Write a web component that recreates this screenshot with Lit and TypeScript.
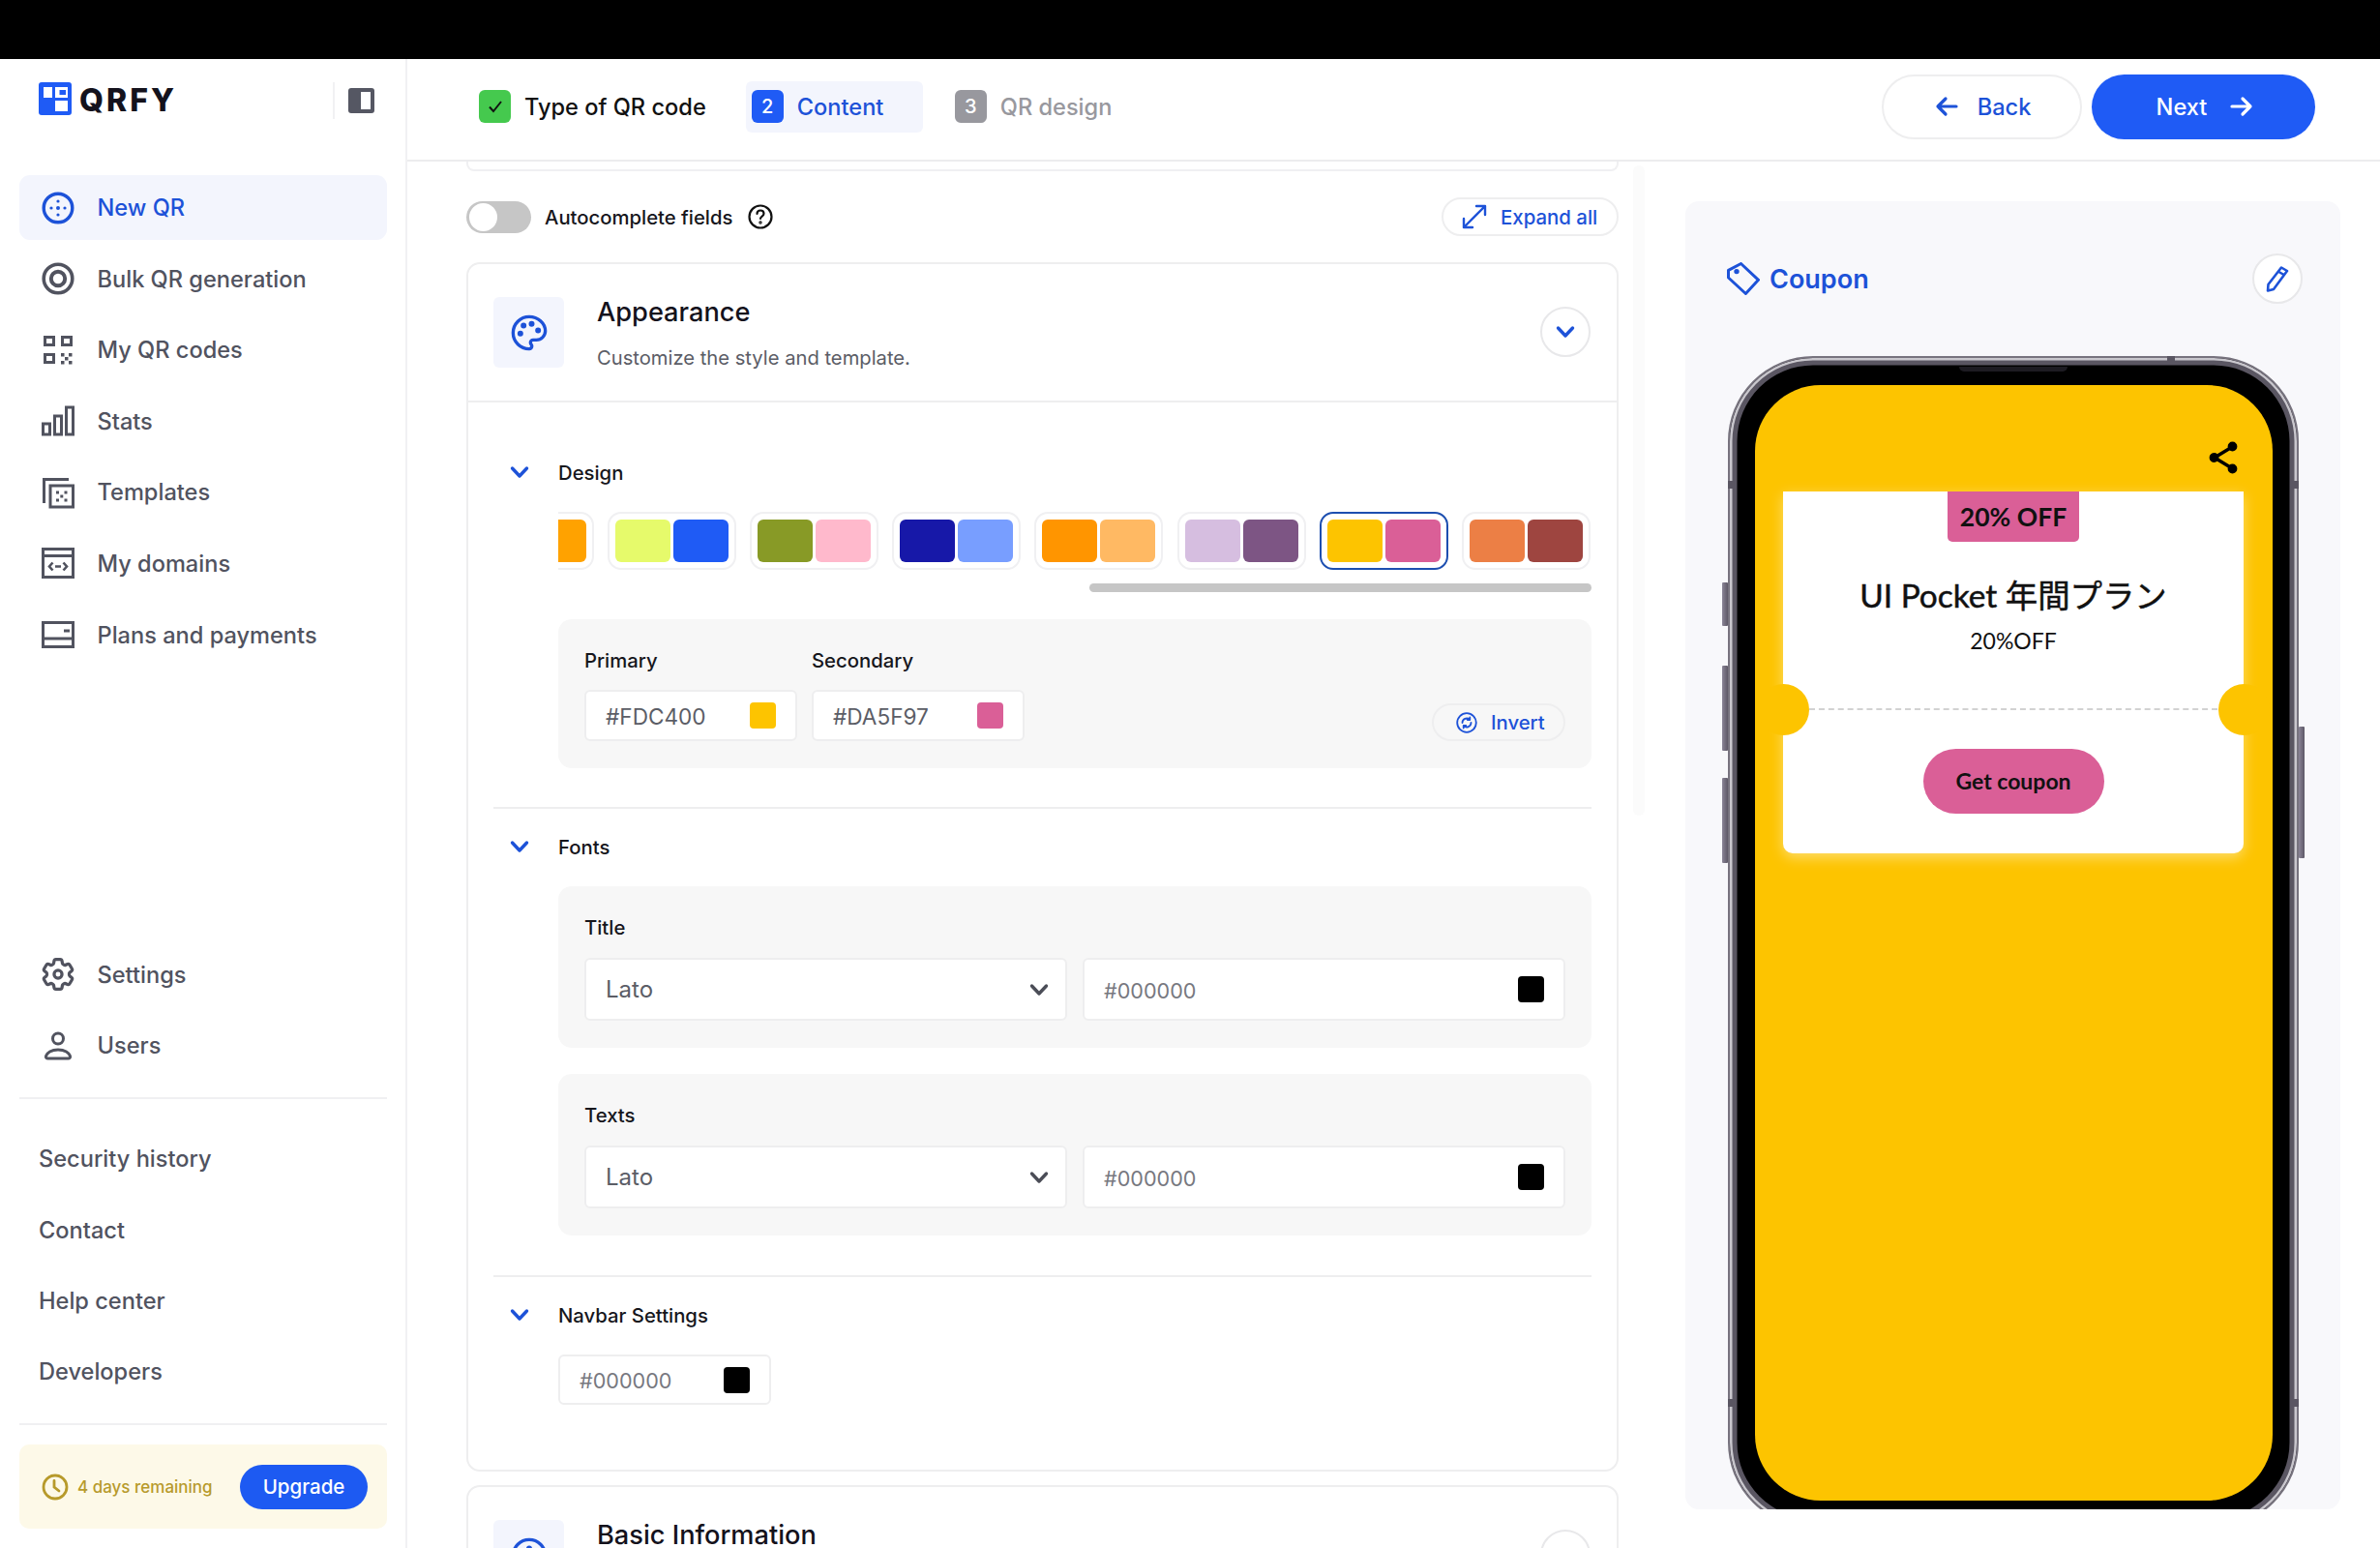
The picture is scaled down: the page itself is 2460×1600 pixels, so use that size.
import { LitElement, html, css, svg } from "lit";
import { customElement } from "lit/decorators.js";

const ic = (body: unknown, size = 34, vb = 34) =>
  html`<svg class="ic" width=${size} height=${size} viewBox="0 0 ${vb} ${vb}" fill="none" stroke="currentColor" stroke-width="3">${body}</svg>`;

const icons = {
  newqr: svg`<circle cx="17" cy="17" r="14.8" stroke-width="3.4"/><g fill="currentColor" stroke="none"><circle cx="17" cy="17" r="2"/><circle cx="17" cy="10" r="1.6"/><circle cx="17" cy="24" r="1.6"/><circle cx="10" cy="17" r="1.6"/><circle cx="24" cy="17" r="1.6"/></g>`,
  bulk: svg`<circle cx="17" cy="17" r="14.8" stroke-width="3.6"/><circle cx="17" cy="17" r="7.2" stroke-width="4"/>`,
  codes: svg`<rect x="3.5" y="3.5" width="9" height="8" /><rect x="21.5" y="3.5" width="9" height="8"/><rect x="3.5" y="21.5" width="9" height="8"/><g fill="currentColor" stroke="none"><rect x="20" y="20" width="3.5" height="3.5"/><rect x="28" y="20" width="3.5" height="3.5"/><rect x="24" y="24" width="3.5" height="3.5"/><rect x="20" y="28" width="3.5" height="3.5"/><rect x="28" y="28" width="3.5" height="3.5"/></g>`,
  stats: svg`<rect x="1.5" y="20" width="7" height="11"/><rect x="13.5" y="12" width="7" height="19"/><rect x="25.5" y="3" width="7" height="28"/>`,
  templates: svg`<path d="M2.5 28V3.5H28"/><rect x="9" y="10" width="23.5" height="22"/><g fill="currentColor" stroke="none"><rect x="15" y="15.5" width="3" height="3"/><rect x="23.5" y="15.5" width="3" height="3"/><rect x="19.3" y="19.5" width="3" height="3"/><rect x="15" y="23.5" width="3" height="3"/><rect x="23.5" y="23.5" width="3" height="3"/></g>`,
  domains: svg`<rect x="1.5" y="2.5" width="31" height="29"/><path d="M1.5 9.5h31"/><path d="M11.5 16.5l-3.5 4 3.5 4M22.5 16.5l3.5 4-3.5 4M14 20.5h6" stroke-width="2.6"/>`,
  plans: svg`<rect x="1.5" y="4.5" width="31" height="25"/><path d="M1.5 21h31"/><path d="M23 13h6"/>`,
  gear: svg`<g transform="translate(-3.4 -3.4) scale(1.7)" stroke-width="1.9"><path d="M9.594 3.94c.09-.542.56-.94 1.11-.94h2.593c.55 0 1.02.398 1.11.94l.213 1.281c.063.374.313.686.645.87.074.04.147.083.22.127.325.196.72.257 1.075.124l1.217-.456a1.125 1.125 0 0 1 1.37.49l1.296 2.247a1.125 1.125 0 0 1-.26 1.431l-1.003.827c-.293.241-.438.613-.43.992a7.723 7.723 0 0 1 0 .255c-.008.378.137.75.43.991l1.004.827c.424.35.534.955.26 1.43l-1.298 2.247a1.125 1.125 0 0 1-1.369.491l-1.217-.456c-.355-.133-.75-.072-1.076.124a6.47 6.47 0 0 1-.22.128c-.331.183-.581.495-.644.869l-.213 1.281c-.09.543-.56.94-1.11.94h-2.594c-.55 0-1.019-.398-1.11-.94l-.213-1.281c-.062-.374-.312-.686-.644-.87a6.52 6.52 0 0 1-.22-.127c-.325-.196-.72-.257-1.076-.124l-1.217.456a1.125 1.125 0 0 1-1.369-.49l-1.297-2.247a1.125 1.125 0 0 1 .26-1.431l1.004-.827c.292-.24.437-.613.43-.991a6.932 6.932 0 0 1 0-.255c.007-.38-.138-.751-.43-.992l-1.004-.827a1.125 1.125 0 0 1-.26-1.43l1.297-2.247a1.125 1.125 0 0 1 1.37-.491l1.216.456c.356.133.751.072 1.076-.124.072-.044.146-.086.22-.128.332-.183.582-.495.644-.869l.214-1.28Z"/><circle cx="12" cy="12" r="2.4"/></g>`,
  user: svg`<circle cx="17" cy="9.500" r="5.500"/><path d="M6.500 30h21c1.500 0 2.500-1 2-2.500-1-3.500-5.500-6.500-12.500-6.500s-11.500 3-12.500 6.500c-.5 1.500.5 2.500 2 2.500z"/>`,
};

const chev = html`<svg class="chev" width="20" height="14" viewBox="0 0 20 14" fill="none" stroke="currentColor" stroke-width="3.4" stroke-linecap="round" stroke-linejoin="round"><path d="M2.500 3l7.500 8 7.500-8"/></svg>`;

const SWATCHES: [string, string, boolean?][] = [
  ["#FFC86A", "#FFA200"],
  ["#E6FA6B", "#1F5BF5"],
  ["#889A26", "#FFB9CC"],
  ["#1718A8", "#789EFF"],
  ["#FF9500", "#FFB963"],
  ["#D6BEE0", "#7D5584"],
  ["#FDC400", "#DA5F97", true],
  ["#EC7F45", "#9E4540"],
];

const NAV: [string, unknown, boolean?][] = [
  ["New QR", icons.newqr, true],
  ["Bulk QR generation", icons.bulk],
  ["My QR codes", icons.codes],
  ["Stats", icons.stats],
  ["Templates", icons.templates],
  ["My domains", icons.domains],
  ["Plans and payments", icons.plans],
];

@customElement("app-root")
export class AppRoot extends LitElement {
  static styles = css`
    :host { display: block; width: 2460px; height: 1600px; overflow: hidden; background: #fff; font-family: Inter, "Noto Sans CJK JP", sans-serif; color: #111; }
    * { box-sizing: border-box; }
    .ic { display: block; flex: none; }
    .top { height: 61px; background: #000; }
    .body { display: flex; height: 1539px; }

    aside { width: 421px; flex: none; border-right: 2px solid #f1f1f3; padding: 0 19px 20px 20px; display: flex; flex-direction: column; color: #51535f; }
    .brand { height: 120px; padding: 24px 13px 0 20px; display: flex; align-items: flex-start; }
    .logo { width: 34px; height: 34px; flex: none; }
    .word { font-size: 32px; line-height: 34px; font-weight: 800; letter-spacing: 3px; color: #14121c; margin: 2px 0 0 8px; }
    .brand-tail { margin-left: auto; display: flex; align-items: center; height: 38px; border-left: 2px solid #f1f1f3; padding-left: 14px; }
    .nav { display: flex; flex-direction: column; gap: 6.6px; }
    .nav.links { gap: 6.2px; }
    .row { height: 67px; display: flex; align-items: center; gap: 23.5px; padding-left: 23px; border-radius: 11px; font-size: 23.6px; font-weight: 500; }
    .row.on { background: #f3f5fd; color: #1d52d8; }
    .links .row { padding-left: 20px; }
    .spacer { flex: 1; }
    .rule { height: 2px; background: #f0f0f2; }
    .rule.a { margin: 20px 0 28px; }
    .rule.b { margin: 20px 0 20px; }
    .trial { height: 87px; flex: none; background: #fdf9e8; border-radius: 10px; display: flex; align-items: center; padding: 0 20px 0 23px; color: #b79a2b; font-size: 17px; font-weight: 500; }
    .trial span { margin-left: 9px; }
    .upgrade { margin-left: auto; width: 132px; height: 46px; border-radius: 23px; background: #1d5af2; color: #fff; font-size: 20.5px; font-weight: 500; display: flex; align-items: center; justify-content: center; }

    .main { flex: 1; display: flex; flex-direction: column; min-width: 0; }
    header { height: 106px; flex: none; border-bottom: 2px solid #ececee; padding: 0 67px 6px 74px; display: flex; align-items: center; }
    .step { display: flex; align-items: center; gap: 14px; font-size: 23.6px; font-weight: 500; }
    .num { width: 33px; height: 34px; border-radius: 6px; display: flex; align-items: center; justify-content: center; color: #fff; font-size: 20px; font-weight: 500; }
    .s1 .num { background: #45c94e; color: #111; }
    .s2 { width: 183px; height: 53px; padding-left: 6px; margin-left: 41px; border-radius: 6px; background: #f3f5fd; color: #1d52d8; }
    .s2 .num { background: #1f5bf5; }
    .s3 { margin-left: 33px; color: #98989e; }
    .s3 .num { background: #98989e; }
    .btns { margin-left: auto; display: flex; gap: 10px; }
    .btn { height: 67px; border-radius: 34px; display: flex; align-items: center; justify-content: center; gap: 20px; font-size: 23.6px; font-weight: 500; }
    .back { width: 207px; border: 2px solid #eeeeef; color: #1d52d8; padding-left: 2px; }
    .next { width: 231px; background: #1f5bf5; color: #fff; gap: 24px; padding-left: 3px; }

    .content { flex: 1; display: flex; min-height: 0; }
    .left { width: 1191px; margin-left: 61px; flex: none; overflow: hidden; }
    .track { width: 12px; height: 672px; margin: 4px 0 0 15px; flex: none; border-radius: 6px; background: #fbfbfb; }
    .prev { height: 10px; border: 2px solid #f0f0f2; border-top: 0; border-radius: 0 0 8px 8px; }
    .tools { display: flex; align-items: center; height: 40px; margin-top: 27px; margin-bottom: 27px; }
    .toggle { width: 67px; height: 33px; border-radius: 17px; background: #c6c6c6; padding: 2px 3px; margin-right: 14px; }
    .knob { width: 29px; height: 29px; border-radius: 50%; background: #fff; }
    .auto { font-size: 20.300px; font-weight: 500; color: #16161c; margin-right: 16px; }
    .expand { margin-left: auto; width: 183px; height: 40px; border: 2px solid #eeeeef; border-radius: 20px; display: flex; align-items: center; gap: 14px; padding-left: 19px; color: #1d52d8; font-size: 20.400px; font-weight: 500; }

    .card { border: 2px solid #eeeeef; border-radius: 14px; }
    .card + .card { margin-top: 14px; }
    .chead { height: 141px; display: flex; align-items: center; padding: 0 27px 0 26px; }
    .hbox { width: 73px; height: 73px; border-radius: 6px; background: #f3f5fd; color: #1d52d8; display: flex; align-items: center; justify-content: center; flex: none; }
    .htext { margin: 1px 0 0 34px; min-height: 79px; }
    .htext h2 { margin: 0; font-size: 27.200px; line-height: 36px; font-weight: 500; color: #14121c; }
    .htext p { margin: 15px 0 0; font-size: 20.200px; line-height: 28px; color: #5b5d66; }
    .card.basic h2 { line-height: 26px; margin-top: 5px; }
    .circle { margin-left: auto; width: 52px; height: 52px; border-radius: 50%; border: 2px solid #e8e8ea; background: #fff; color: #1d52d8; display: flex; align-items: center; justify-content: center; }
    .chead .circle { margin-top: -2px; }
    .cbody { border-top: 2px solid #eeeeef; padding: 57px 26px 67px; }
    .shead { display: flex; align-items: center; height: 30px; padding-left: 17px; gap: 30px; font-size: 20.300px; font-weight: 500; color: #16161c; }
    .shead .chev { color: #1d52d8; flex: none; }
    .sbody { margin: 26px 0 0 67px; }
    .swatches { display: flex; justify-content: flex-end; gap: 14.200px; overflow: hidden; padding-right: 1px; }
    .sw { width: 133px; height: 60px; flex: none; border: 2px solid #f0f0f2; border-radius: 14px; padding: 6px 6px; display: flex; gap: 3px; background: #fff; }
    .sw.sel { border-color: #1d4fb0; }
    .sw i { flex: 1; border-radius: 6px; }
    .sbar { height: 9px; width: 519px; margin: 14px 0 28px auto; border-radius: 5px; background: #c6c6c6; }
    .panel { background: #f7f7f7; border-radius: 14px; padding: 29px 27px 28px; }
    .panel + .panel { margin-top: 27px; }
    label { display: block; font-size: 20.300px; line-height: 28px; font-weight: 500; color: #16161c; }
    .colors { display: flex; gap: 15px; }
    .field label { margin-bottom: 16px; }
    .input { background: #fff; border: 2px solid #eeeeef; border-radius: 6px; display: flex; align-items: center; padding: 0 20px 0 20px; font-size: 24px; color: #5b5d66; }
    .input span { font-size: 22.600px; padding-top: 2px; }
    .input b { margin-left: auto; width: 27px; height: 27px; border-radius: 4px; flex: none; }
    .input .chev { margin-left: auto; color: #4b4d57; margin-right: -3px; }
    .color { width: 220px; height: 53px; }
    .input span.light { color: #77787f; font-size: 21.600px; }
    .invert { margin-left: auto; align-self: flex-end; width: 138px; height: 39px; border: 2px solid #eeeeef; border-radius: 20px; display: flex; align-items: center; gap: 14px; padding-left: 23px; color: #1d52d8; font-size: 20.300px; font-weight: 500; }
    .fgrid { display: grid; grid-template-columns: 1fr 1fr; gap: 16px; margin-top: 17px; }
    .fgrid .input { height: 65px; }
    .srule { height: 2px; background: #eeeeef; margin: 40px 0 24px; }
    .srule.t { margin-top: 41px; margin-bottom: 24px; }
    .nav-color { width: 220px; height: 52px; }

    .preview { width: 677px; height: 1352px; margin: 41px 0 0 42px; flex: none; background: #f8f8fb; border-radius: 14px; overflow: hidden; padding: 54px 0 0 44px; position: relative; }
    .phead { display: flex; align-items: center; height: 52px; padding-right: 39px; margin-left: -1px; gap: 10px; color: #1d52d8; font-size: 27px; font-weight: 600; }
    .phone { position: relative; width: 590px; height: 1211px; margin-top: 54px; border-radius: 88px; background: #000; border: 2px solid #77737e; box-shadow: inset 0 0 0 2.500px #c9c7cd, inset 0 0 0 7.500px #5a5662; padding: 27.500px 25.500px 0; }
    .notch { position: absolute; left: 237px; top: 9px; width: 112px; height: 5px; border-radius: 0 0 6px 6px; background: #1d1b22; }
    .side { position: absolute; width: 6px; background: linear-gradient(90deg, #8b8597, #5d5866); border-radius: 1px; }
    .side.l { left: -8px; }
    .side.l1 { top: 232px; height: 45px; }
    .side.l2 { top: 318px; height: 88px; }
    .side.l3 { top: 434px; height: 88px; }
    .side.r { left: 588px; top: 381px; height: 136px; }
    .ant { position: absolute; background: #5a5662; }
    .ant.t { left: 452px; top: -2px; width: 8px; height: 9px; }
    .ant.a { left: -2px; width: 8px; height: 8px; }
    .ant.b { right: -2px; width: 8px; height: 8px; }
    .ant.y1 { top: 127px; }
    .ant.y2 { top: 1076px; }
    .screen { height: 1153.500px; border-radius: 68px; background: #fdc400; display: flex; flex-direction: column; padding-top: 58px; overflow: hidden; position: relative; }
    .share { align-self: flex-end; margin-right: 36px; color: #000; }
    .coupon { margin: 18px 0 0 29.500px; width: 476px; height: 374px; background: #fff; border-radius: 0 0 10px 10px; box-shadow: 0 4px 14px rgba(255,255,255,.45); display: flex; flex-direction: column; align-items: center; font-family: Lato, "Noto Sans CJK JP", sans-serif; color: #111; }
    .badge { width: 136px; height: 52px; background: #da5f97; border-radius: 0 0 5px 5px; display: flex; align-items: center; justify-content: center; font-size: 26.500px; font-weight: 700; }
    .ctitle { font-size: 33.400px; line-height: 44px; margin-top: 33px; -webkit-text-stroke: 0.5px #111; }
    .csub { font-size: 23px; line-height: 30px; margin-top: 10px; }
    .perf { width: 100%; height: 53px; margin-top: 30px; display: flex; align-items: center; }
    .perf i { width: 53px; height: 53px; border-radius: 50%; background: #fdc400; flex: none; margin: 0 -26.500px; }
    .perf u { flex: 1; margin: 0 27px; border-top: 2px dashed #d2d2d2; }
    .get { width: 187px; height: 67px; margin-top: 14px; border-radius: 34px; background: #da5f97; display: flex; align-items: center; justify-content: center; font-size: 23px; font-weight: 700; }
  `;

  private colorInput(val: string, c: string, light = false, extra = "color") {
    return html`<div class="input ${extra}"><span class=${light ? "light" : ""}>${val}</span><b style="background:${c}"></b></div>`;
  }

  private fontPanel(name: string) {
    return html`<div class="panel">
      <label>${name}</label>
      <div class="fgrid">
        <div class="input">Lato ${chev}</div>
        ${this.colorInput("#000000", "#000", true, "")}
      </div>
    </div>`;
  }

  render() {
    return html`
      <div class="top"></div>
      <div class="body">
        <aside>
          <div class="brand">
            <svg class="logo" viewBox="0 0 34 34"><rect width="34" height="34" rx="3" fill="#1f5bf5"/><path fill="#fff" d="M5 5h9v11H5zM17 5h13v11H17zM17 19h13v11H17z"/><path fill="#1f5bf5" d="M21.500 8h6.500v5h-6.500z"/></svg>
            <span class="word">QRFY</span>
            <div class="brand-tail">
              <svg width="27" height="26" viewBox="0 0 27 26"><rect width="27" height="26" rx="3" fill="#555763"/><rect x="13" y="4" width="10" height="18" fill="#fff"/></svg>
            </div>
          </div>
          <div class="nav">
            ${NAV.map(([t, i, on]) => html`<div class="row ${on ? "on" : ""}">${ic(i)}<span>${t}</span></div>`)}
          </div>
          <div class="spacer"></div>
          <div class="nav">
            <div class="row">${ic(icons.gear)}<span>Settings</span></div>
            <div class="row">${ic(icons.user)}<span>Users</span></div>
          </div>
          <div class="rule a"></div>
          <div class="nav links">
            ${["Security history", "Contact", "Help center", "Developers"].map((t) => html`<div class="row">${t}</div>`)}
          </div>
          <div class="rule b"></div>
          <div class="trial">
            <svg width="28" height="28" viewBox="0 0 28 28" fill="none" stroke="currentColor" stroke-width="2.800" stroke-linecap="round"><circle cx="14" cy="14" r="12"/><path d="M13 7.500V14l5 4"/></svg>
            <span>4 days remaining</span>
            <div class="upgrade">Upgrade</div>
          </div>
        </aside>

        <div class="main">
          <header>
            <div class="step s1"><div class="num"><svg width="18" height="18" viewBox="0 0 18 18" fill="none" stroke="currentColor" stroke-width="2"><path d="M3 9.500l4 4.500 8-10"/></svg></div>Type of QR code</div>
            <div class="step s2"><div class="num">2</div>Content</div>
            <div class="step s3"><div class="num">3</div>QR design</div>
            <div class="btns">
              <div class="btn back"><svg width="24" height="22" viewBox="0 0 24 22" fill="none" stroke="currentColor" stroke-width="3.200" stroke-linecap="round" stroke-linejoin="round"><path d="M22 11H3M11 3l-8 8 8 8"/></svg>Back</div>
              <div class="btn next">Next<svg width="24" height="22" viewBox="0 0 24 22" fill="none" stroke="currentColor" stroke-width="3.200" stroke-linecap="round" stroke-linejoin="round"><path d="M2 11h19M13 3l8 8-8 8"/></svg></div>
            </div>
          </header>
          <div class="content">
            <div class="left">
              <div class="prev"></div>
              <div class="tools">
                <div class="toggle"><div class="knob"></div></div>
                <span class="auto">Autocomplete fields</span>
                <svg width="26" height="26" viewBox="0 0 26 26" fill="none" stroke="#111" stroke-width="2.200" stroke-linecap="round"><circle cx="13" cy="13" r="11.500"/><path d="M9.500 10c0-2 1.500-3.500 3.500-3.500s3.500 1.300 3.500 3.200c0 2.800-3.500 2.800-3.500 5.300"/><circle cx="13" cy="19" r=".6"/></svg>
                <div class="expand"><svg width="26" height="26" viewBox="0 0 26 26" fill="none" stroke="currentColor" stroke-width="2.400" stroke-linecap="round" stroke-linejoin="round"><path d="M15 2h9v9M24 2L2 24M2 15v9h9"/></svg>Expand all</div>
              </div>

              <div class="card">
                <div class="chead">
                  <div class="hbox"><svg width="40" height="40" viewBox="0 0 24 24" fill="none" stroke="currentColor" stroke-width="2" stroke-linecap="round" stroke-linejoin="round"><circle cx="13.500" cy="6.500" r=".8" fill="currentColor"/><circle cx="17.500" cy="10.500" r=".8" fill="currentColor"/><circle cx="8.500" cy="7.500" r=".8" fill="currentColor"/><circle cx="6.500" cy="12.500" r=".8" fill="currentColor"/><path d="M12 2C6.500 2 2 6.500 2 12s4.500 10 10 10c.926 0 1.648-.746 1.648-1.688 0-.437-.18-.835-.437-1.125-.29-.289-.438-.652-.438-1.125a1.640 1.640 0 0 1 1.668-1.668h1.996c3.051 0 5.555-2.503 5.555-5.554C21.965 6.012 17.461 2 12 2z"/></svg></div>
                  <div class="htext"><h2>Appearance</h2><p>Customize the style and template.</p></div>
                  <div class="circle">${chev}</div>
                </div>
                <div class="cbody">
                  <div class="shead">${chev}Design</div>
                  <div class="sbody">
                    <div class="swatches">
                      ${SWATCHES.map(([a, b, sel]) => html`<div class="sw ${sel ? "sel" : ""}"><i style="background:${a}"></i><i style="background:${b}"></i></div>`)}
                    </div>
                    <div class="sbar"></div>
                    <div class="panel">
                      <div class="colors">
                        <div class="field"><label>Primary</label>${this.colorInput("#FDC400", "#FDC400")}</div>
                        <div class="field"><label>Secondary</label>${this.colorInput("#DA5F97", "#DA5F97")}</div>
                        <div class="invert"><svg width="22" height="22" viewBox="0 0 22 22" fill="none" stroke="currentColor" stroke-width="1.800" stroke-linecap="round" stroke-linejoin="round"><circle cx="11" cy="11" r="9.800"/><path d="M6.500 11a4.500 4.500 0 0 1 7.500-3.300M15.500 11a4.500 4.500 0 0 1-7.500 3.300M14.300 5.500v2.500h-2.500M7.700 16.500V14h2.500"/></svg>Invert</div>
                      </div>
                    </div>
                  </div>
                  <div class="srule"></div>
                  <div class="shead">${chev}Fonts</div>
                  <div class="sbody">
                    ${this.fontPanel("Title")}
                    ${this.fontPanel("Texts")}
                  </div>
                  <div class="srule t"></div>
                  <div class="shead">${chev}Navbar Settings</div>
                  <div class="sbody">${this.colorInput("#000000", "#000", true, "nav-color")}</div>
                </div>
              </div>

              <div class="card basic">
                <div class="chead">
                  <div class="hbox"><svg width="40" height="40" viewBox="0 0 24 24" fill="none" stroke="currentColor" stroke-width="2" stroke-linecap="round"><circle cx="12" cy="12" r="10"/><path d="M12 11v6"/><circle cx="12" cy="7.500" r=".8" fill="currentColor"/></svg></div>
                  <div class="htext"><h2>Basic Information</h2></div>
                  <div class="circle">${chev}</div>
                </div>
              </div>
            </div>

            <div class="track"></div>

            <div class="preview">
              <div class="phead">
                <svg width="34" height="34" viewBox="0 0 34 34" fill="none" stroke="currentColor" stroke-width="3" stroke-linejoin="round"><path d="M14.500 1.500L1.500 8.300V16L19.400 32.500 32.500 18.300z"/><circle cx="10" cy="9.600" r="1.200" fill="currentColor"/></svg>
                <span>Coupon</span>
                <div class="circle"><svg width="24" height="28" viewBox="0 0 24 28" fill="none" stroke="currentColor" stroke-width="2.600" stroke-linejoin="round"><path d="M16 2.500l6 3.500L8 25l-6 1.500L2.500 20zM13.500 7l6 3.500"/></svg></div>
              </div>
              <div class="phone">
                <div class="side l l1"></div>
                <div class="side l l2"></div>
                <div class="side l l3"></div>
                <div class="side r"></div>
                <div class="ant t"></div>
                <div class="ant a y1"></div>
                <div class="ant b y1"></div>
                <div class="ant a y2"></div>
                <div class="ant b y2"></div>
                <div class="notch"></div>
                <div class="screen">
                  <svg class="share" width="30" height="34" viewBox="0 0 30 34" fill="currentColor" stroke="currentColor" stroke-width="3.400"><path d="M24 6L6 17l18 11" fill="none"/><circle cx="24.500" cy="5.500" r="3.200"/><circle cx="5.500" cy="17" r="3.200"/><circle cx="24.500" cy="28.500" r="3.200"/></svg>
                  <div class="coupon">
                    <div class="badge">20% OFF</div>
                    <div class="ctitle">UI Pocket 年間プラン</div>
                    <div class="csub">20%OFF</div>
                    <div class="perf"><i></i><u></u><i></i></div>
                    <div class="get">Get coupon</div>
                  </div>
                </div>
              </div>
            </div>
          </div>
        </div>
      </div>
    `;
  }
}
